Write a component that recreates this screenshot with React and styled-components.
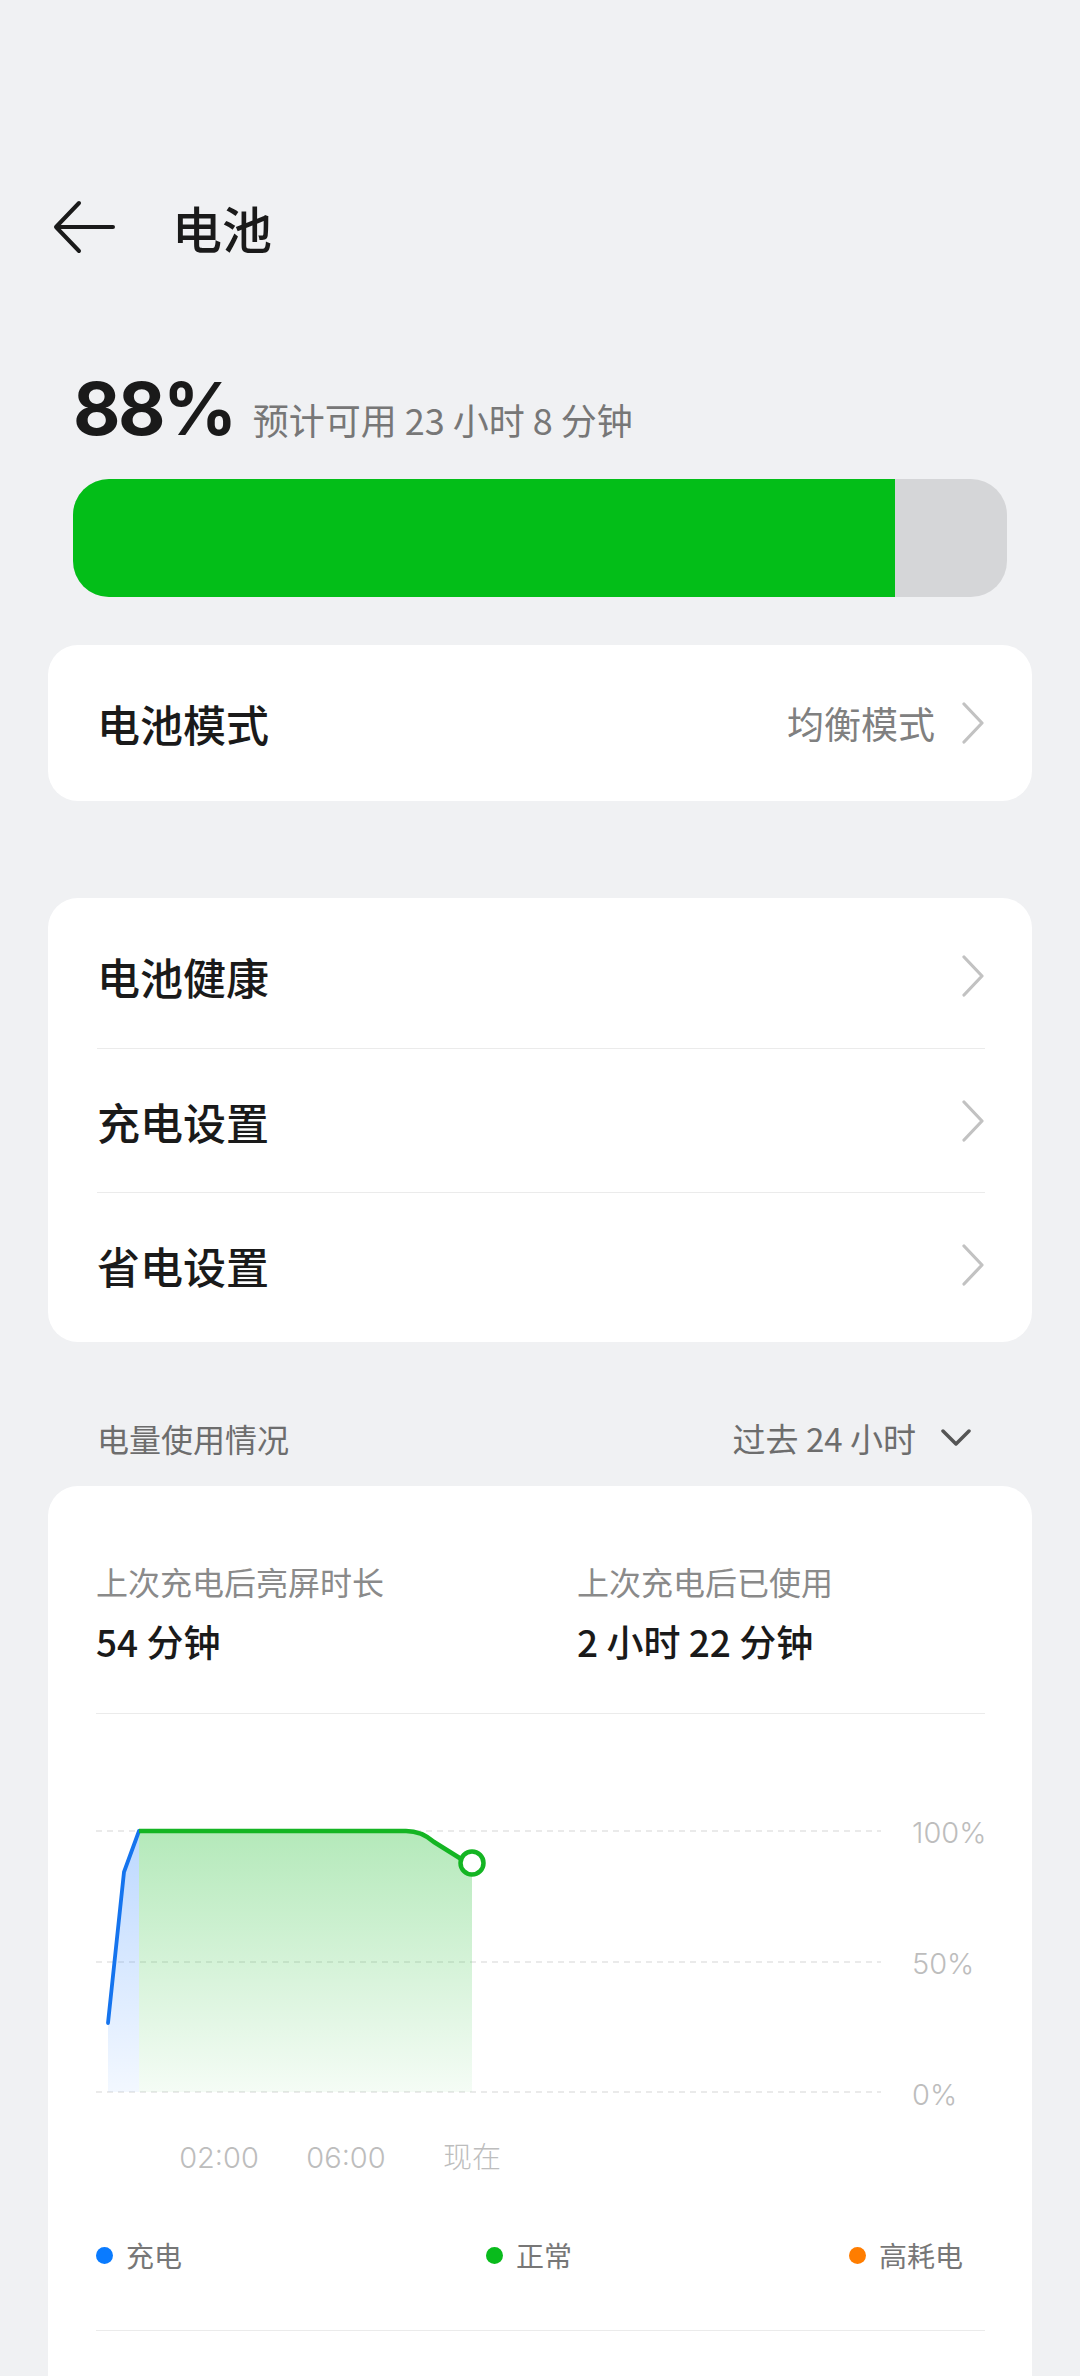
import React from "react";
import styled, { createGlobalStyle } from "styled-components";

const GlobalStyle = createGlobalStyle`
  html, body { margin: 0; padding: 0; background: #f0f1f3; }
  body {
    font-family: "Noto Sans CJK SC", "Noto Sans", sans-serif;
    color: #1a1a1a;
    -webkit-font-smoothing: antialiased;
  }
`;

const Page = styled.div`
  width: 1080px;
  min-height: 2376px;
  box-sizing: border-box;
  padding: 175px 48px 0;
  display: flex;
  flex-direction: column;
  background: #f0f1f3;
`;

const Header = styled.header`
  height: 104px;
  display: flex;
  align-items: center;
  gap: 57px;
  padding-left: 5px;
`;

const Title = styled.h1`
  margin: 0;
  font-size: 50px;
  font-weight: 500;
  line-height: 1;
  color: #1a1a1a;
`;

const SummaryRow = styled.div`
  margin-top: 93px;
  padding-left: 25px;
  height: 76px;
  display: flex;
  align-items: baseline;
`;

const Percent = styled.span`
  font-family: Inter, "Noto Sans", sans-serif;
  font-size: 73px;
  font-weight: 700;
  line-height: 1;
  letter-spacing: -2.5px;
  color: #1a1a1a;
`;

const Estimate = styled.span`
  margin-left: 18px;
  font-size: 36px;
  line-height: 1;
  color: #777;
`;

const Bar = styled.div`
  margin: 31px 25px 0;
  height: 118px;
  border-radius: 36px;
  background: #d5d6d8;
  overflow: hidden;
  display: flex;
`;

const BarFill = styled.div`
  height: 100%;
  background: #03be18;
`;

const Card = styled.section`
  background: #ffffff;
  border-radius: 30px;
  margin-top: ${(p) => p.$top}px;
  padding: ${(p) => p.$pad || "6px 0"};
`;

const Row = styled.div`
  height: 144px;
  margin: 0 47px 0 49px;
  display: flex;
  align-items: center;
  justify-content: space-between;
  box-sizing: border-box;
  & + & { border-top: 1px solid #ebebeb; }
`;

const RowLabel = styled.span`
  font-size: 43px;
  font-weight: 500;
  color: #1a1a1a;
`;

const RowRight = styled.div`
  display: flex;
  align-items: center;
  gap: 26px;
`;

const RowValue = styled.span`
  font-size: 37px;
  color: #808080;
`;

const SectionHeader = styled.div`
  margin-top: 72px;
  margin-bottom: 24px;
  height: 48px;
  padding: 0 61px 0 49px;
  display: flex;
  align-items: center;
  justify-content: space-between;
`;

const SectionTitle = styled.span`
  font-size: 32px;
  color: #6d6d6d;
`;

const RangeSelect = styled.div`
  display: flex;
  align-items: center;
  gap: 25px;
  font-size: 33px;
  color: #6d6d6d;
`;

const StatsGrid = styled.div`
  display: grid;
  grid-template-columns: 481px 1fr;
`;

const StatLabel = styled.div`
  font-size: 32px;
  line-height: 44px;
  color: #8a8a8a;
`;

const StatValue = styled.div`
  margin-top: 14px;
  font-size: 37px;
  line-height: 48px;
  font-weight: 500;
  color: #1a1a1a;
`;

const Divider = styled.div`
  margin-top: ${(p) => p.$top}px;
  height: 1px;
  background: #ebebeb;
`;

const ChartSvg = styled.svg`
  display: block;
  width: 889px;
  height: 476px;
  font-family: Inter, "Noto Sans CJK SC", sans-serif;
`;

const Legend = styled.div`
  margin-top: 45px;
  height: 40px;
  display: grid;
  grid-template-columns: 390px 363px 1fr;
  align-items: center;
`;

const LegendItem = styled.div`
  display: flex;
  align-items: center;
  gap: 13px;
  font-size: 28px;
  color: #777;
`;

const Dot = styled.span`
  width: 17px;
  height: 17px;
  border-radius: 50%;
  background: ${(p) => p.$color};
`;

const BackArrow = () => (
  <svg width="62" height="54" viewBox="0 0 62 54" fill="none">
    <path d="M60 27H3M26 3L3 27l23 24" stroke="#1a1a1a" strokeWidth="4" strokeLinecap="round" strokeLinejoin="round" />
  </svg>
);

const Chevron = () => (
  <svg width="24" height="42" viewBox="0 0 24 42" fill="none">
    <path d="M3 2l18 19L3 40" stroke="#c2c2c2" strokeWidth="3.2" strokeLinecap="round" strokeLinejoin="round" />
  </svg>
);

const ChevronDown = () => (
  <svg width="30" height="18" viewBox="0 0 30 18" fill="none">
    <path d="M2 2l13 13L28 2" stroke="#555" strokeWidth="3.5" strokeLinecap="round" strokeLinejoin="round" />
  </svg>
);

const Chart = () => (
  <ChartSvg viewBox="0 0 889 476">
    <defs>
      <linearGradient id="gFill" x1="0" y1="0" x2="0" y2="1">
        <stop offset="0" stopColor="#2fc23f" stopOpacity="0.36" />
        <stop offset="1" stopColor="#2fc23f" stopOpacity="0.05" />
      </linearGradient>
      <linearGradient id="bFill" x1="0" y1="0" x2="0" y2="1">
        <stop offset="0" stopColor="#2f86ff" stopOpacity="0.32" />
        <stop offset="1" stopColor="#2f86ff" stopOpacity="0.06" />
      </linearGradient>
    </defs>
    {[117, 248, 378].map((y) => (
      <line key={y} x1="0" x2="785" y1={y} y2={y} stroke="#e4e4e4" strokeWidth="1.5" strokeDasharray="6 5" />
    ))}
    <path d="M12 309L28 158L43 117V378H12Z" fill="url(#bFill)" />
    <path d="M43 117H310C322 117 330 121 338 128L376 149V378H43Z" fill="url(#gFill)" />
    <path d="M12 309L28 158L43 117" stroke="#1574ee" strokeWidth="3.8" fill="none" strokeLinejoin="round" strokeLinecap="round" />
    <path d="M43 117H310C322 117 330 121 338 128L370 148" stroke="#14b523" strokeWidth="4.5" fill="none" strokeLinejoin="round" />
    <circle cx="376" cy="149" r="11.5" fill="#fff" stroke="#14b523" strokeWidth="4.5" />
    <g fill="#bdbdbd" fontSize="29" fontWeight="300">
      <text x="816" y="129">100%</text>
      <text x="816" y="260">50%</text>
      <text x="816" y="391">0%</text>
      <text x="123" y="454" textAnchor="middle">02:00</text>
      <text x="250" y="454" textAnchor="middle">06:00</text>
      <text x="376" y="454" textAnchor="middle">现在</text>
    </g>
  </ChartSvg>
);

const settings = ["电池健康", "充电设置", "省电设置"];

export default function App() {
  return (
    <>
      <GlobalStyle />
      <Page>
        <Header>
          <BackArrow />
          <Title>电池</Title>
        </Header>

        <SummaryRow>
          <Percent>88%</Percent>
          <Estimate>预计可用 23 小时 8 分钟</Estimate>
        </SummaryRow>
        <Bar>
          <BarFill style={{ width: "88%" }} />
        </Bar>

        <Card $top={48}>
          <Row>
            <RowLabel>电池模式</RowLabel>
            <RowRight>
              <RowValue>均衡模式</RowValue>
              <Chevron />
            </RowRight>
          </Row>
        </Card>

        <Card $top={97}>
          {settings.map((s) => (
            <Row key={s}>
              <RowLabel>{s}</RowLabel>
              <Chevron />
            </Row>
          ))}
        </Card>

        <SectionHeader>
          <SectionTitle>电量使用情况</SectionTitle>
          <RangeSelect>
            过去 24 小时
            <ChevronDown />
          </RangeSelect>
        </SectionHeader>

        <Card $top={0} $pad="73px 47px 100px 48px">
          <StatsGrid>
            <div>
              <StatLabel>上次充电后亮屏时长</StatLabel>
              <StatValue>54 分钟</StatValue>
            </div>
            <div>
              <StatLabel>上次充电后已使用</StatLabel>
              <StatValue>2 小时 22 分钟</StatValue>
            </div>
          </StatsGrid>
          <Divider $top={48} />
          <Chart />
          <Legend>
            <LegendItem><Dot $color="#0a7bff" />充电</LegendItem>
            <LegendItem><Dot $color="#09bb1c" />正常</LegendItem>
            <LegendItem><Dot $color="#ff7d00" />高耗电</LegendItem>
          </Legend>
          <Divider $top={55} />
        </Card>
      </Page>
    </>
  );
}
